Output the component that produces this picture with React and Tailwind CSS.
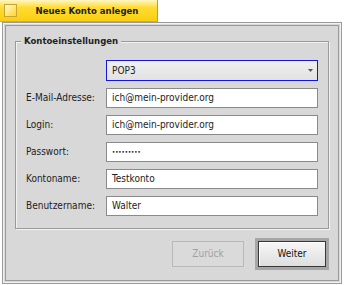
export default function App() {
  const rows = [
    ["E-Mail-Adresse:", "ich@mein-provider.org"],
    ["Login:", "ich@mein-provider.org"],
    ["Passwort:", "•••••••••", true],
    ["Kontoname:", "Testkonto"],
    ["Benutzername:", "Walter"],
  ];
  return (
    <div className="w-[344px] h-[285px] overflow-hidden bg-white font-['DejaVu_Sans_Condensed','DejaVu_Sans',sans-serif] [font-stretch:condensed] text-[10px] leading-[12px] text-[#222]">
      <div className="flex h-[22px]">
        <div className="flex w-[158px] items-center border-r border-[#9a9a9a] border-b border-b-[#e0b000] bg-[linear-gradient(#fff6c4,#ffdc34_35%,#fbcf10)] pl-[4px]">
          <div className="h-[13px] w-[13px] border border-[#c9a436] bg-[linear-gradient(135deg,#fffbe0,#ffe46a_60%,#ffd633)]" />
          <div className="flex-1 text-center text-[9.5px] font-bold">Neues Konto anlegen</div>
        </div>
        <div className="flex-1" />
      </div>
      <div className="mx-[2px] h-[262px] border border-[#9a9a9a] bg-[#d8d8d8] p-[2px] shadow-[inset_0_0_0_1px_#f2f2f2]">
        <div className="flex h-full flex-col border border-[#9a9a9a] px-[9px] pt-[15px]">
          <div className="relative h-[188px] border border-[#9a9a9a] px-[10px] pt-[18px] shadow-[inset_1px_1px_0_#f2f2f2,1px_1px_0_#f2f2f2]">
            <span className="absolute -top-[7px] left-[5px] bg-[#d8d8d8] px-[3px] text-[9.5px] font-bold leading-[12px]">
              Kontoeinstellungen
            </span>
            <div className="flex flex-col gap-[7px]">
              <div className="flex h-[21px] items-center">
                <div className="w-[80px]" />
                <div className="flex h-full flex-1 items-center justify-between border border-[#1414e6] bg-[linear-gradient(#f0f0f0,#e2e2e2)] pl-[5px] pr-[4px]">
                  <span>POP3</span>
                  <svg width="5" height="3" viewBox="0 0 5 3">
                    <path d="M0 0H5L2.5 3Z" fill="#555" />
                  </svg>
                </div>
              </div>
              {rows.map(([label, value, pw]) => (
                <div key={label} className="flex h-[20px] items-center">
                  <div className="w-[80px]">{label}</div>
                  <div className="flex h-full flex-1 items-center border border-[#8a8a8a] bg-white pl-[5px]">
                    {pw ? (
                      <span className="text-[6px] leading-[6px] text-black">{value}</span>
                    ) : (
                      <span>{value}</span>
                    )}
                  </div>
                </div>
              ))}
            </div>
          </div>
          <div className="mt-[9px] flex items-center justify-end gap-[11px]">
            <div className="flex h-[26px] w-[72px] items-center justify-center border border-[#b8b8b8] bg-[#dadada] text-[#a0a0a0]">
              Zurück
            </div>
            <div className="border-[3px] border-[#a6a6a6]">
              <div className="flex h-[26px] w-[68px] items-center justify-center border border-[#383838] bg-[linear-gradient(#f7f7f7,#dedede)] text-[#111] shadow-[inset_1px_1px_0_#fff]">
                Weiter
              </div>
            </div>
          </div>
        </div>
      </div>
    </div>
  );
}
